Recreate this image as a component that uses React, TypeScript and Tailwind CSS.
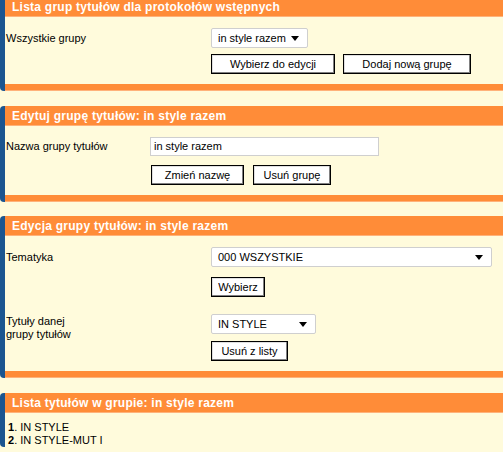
import React from 'react';

const orange = 'bg-[#ff8c38]';

function Button({ label, w }: { label: string; w: string }) {
  return (
    <button
      className={`${w} h-[20px] bg-white border border-black shadow-[inset_-1px_-1px_0_#808080,inset_1px_1px_0_#e0e0e0] text-[11px] text-black leading-none`}
    >
      {label}
    </button>
  );
}

function Select({ value, w }: { value: string; w: string }) {
  return (
    <div
      className={`${w} h-[20px] bg-white border border-[#cfcfcf] rounded-[2px] flex items-center justify-between pl-[6px] pr-[8px] text-[11px] text-black`}
    >
      <span>{value}</span>
      <svg width="8" height="5" viewBox="0 0 8 5">
        <path d="M0 0h8L4 5z" fill="#000" />
      </svg>
    </div>
  );
}

function Section({
  title,
  children,
  gap,
  first,
  last,
}: {
  title: string;
  children: React.ReactNode;
  gap?: string;
  first?: boolean;
  last?: boolean;
}) {
  return (
    <div className={`border-l-[5px] border-[#1b5590] rounded-l-[4px] ${first ? '-mt-[3px]' : ''} ${gap ?? ''}`}>
      <div
        className={`${orange} h-[20px] pl-[7px] flex items-center text-white font-bold text-[12px] tracking-[0.25px] border-b border-[#ffb27a]`}
      >
        {title}
      </div>
      <div className="bg-[#fffbdc]">{children}</div>
      {!last && <div className={`${orange} h-[7px] border-b border-[#ffb27a]`} />}
    </div>
  );
}

export default function App() {
  return (
    <div className="w-[503px] h-[452px] overflow-hidden bg-[#fffbdc] font-['Liberation_Sans',Arial,sans-serif] text-[11px] text-black">
      {/* Lista grup */}
      <Section title="Lista grup tytułów dla protokołów wstępnych" first gap="mb-[15px]">
        <div className="pt-[11px] pb-[10px]">
          <div className="flex items-center h-[20px]">
            <div className="w-[206px] pl-[1px]">Wszystkie grupy</div>
            <Select value="in style razem" w="w-[97px]" />
          </div>
          <div className="flex gap-[8px] pl-[206px] mt-[6px]">
            <Button label="Wybierz do edycji" w="w-[124px]" />
            <Button label="Dodaj nową grupę" w="w-[128px]" />
          </div>
        </div>
      </Section>

      {/* Edytuj grupę */}
      <Section title="Edytuj grupę tytułów: in style razem" gap="mb-[14px]">
        <div className="pt-[11px] pb-[10px]">
          <div className="flex items-center h-[19px]">
            <div className="w-[145px] pl-[1px]">Nazwa grupy tytułów</div>
            <div className="w-[229px] h-[19px] bg-white border border-[#cfcfcf] flex items-center pl-[3px]">
              in style razem
            </div>
          </div>
          <div className="flex gap-[9px] pl-[146px] mt-[9px]">
            <Button label="Zmień nazwę" w="w-[93px]" />
            <Button label="Usuń grupę" w="w-[78px]" />
          </div>
        </div>
      </Section>

      {/* Edycja grupy */}
      <Section title="Edycja grupy tytułów: in style razem" gap="mb-[15px]">
        <div className="pt-[11px] pb-[10px]">
          <div className="flex items-center h-[20px]">
            <div className="w-[206px] pl-[1px]">Tematyka</div>
            <Select value="000 WSZYSTKIE" w="w-[281px]" />
          </div>
          <div className="pl-[206px] mt-[10px] flex">
            <Button label="Wybierz" w="w-[54px]" />
          </div>
          <div className="flex items-start h-[20px] mt-[17px]">
            <div className="w-[206px] pl-[1px] leading-[13px] pt-[1px]">
              Tytuły danej
              <br />
              grupy tytułów
            </div>
            <Select value="IN STYLE" w="w-[105px]" />
          </div>
          <div className="pl-[206px] mt-[7px] flex">
            <Button label="Usuń z listy" w="w-[77px]" />
          </div>
        </div>
      </Section>

      {/* Lista tytułów */}
      <Section title="Lista tytułów w grupie: in style razem" last>
        <div className="pt-[8px] pl-[3px] leading-[13px]">
          <div>
            <b>1</b>. IN STYLE
          </div>
          <div>
            <b>2</b>. IN STYLE-MUT I
          </div>
        </div>
      </Section>
    </div>
  );
}
